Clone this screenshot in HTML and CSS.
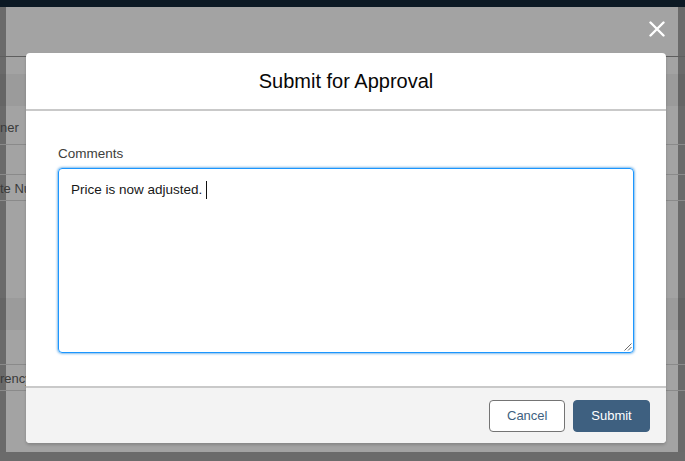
FILE: index.html
```html
<!DOCTYPE html>
<html lang="en">
<head>
<meta charset="utf-8">
<title>Submit for Approval</title>
<link rel="stylesheet" href="styles.css">
</head>
<body>
<div class="topbar"></div>
<main class="stage">
  <div class="row row-a"></div>
  <div class="row row-b"></div>
  <div class="row band"></div>
  <div class="row row-owner"><span class="bg-text">ner</span></div>
  <div class="row row-empty"></div>
  <div class="row row-quote"><span class="bg-text">te Number</span></div>
  <div class="row row-gap"></div>
  <div class="row band"></div>
  <div class="row row-c"></div>
  <div class="row row-currency"><span class="bg-text">rency</span></div>
  <div class="row row-rest"></div>
</main>
<div class="bottom-edge"></div>

<button class="close" aria-label="Close">
  <svg width="16" height="16" viewBox="0 0 16 16"><path d="M1.5 1.5 L14.5 14.5 M14.5 1.5 L1.5 14.5" stroke="#fff" stroke-width="2.4" stroke-linecap="round" fill="none"/></svg>
</button>

<section class="modal" role="dialog">
  <header class="modal-header">
    <h2 class="modal-title">Submit for Approval</h2>
  </header>
  <div class="modal-body">
    <label class="field-label">Comments</label>
    <div class="textarea">
      <span class="ta-text">Price is now adjusted.</span><span class="caret"></span>
      <svg class="grip" width="8" height="8" viewBox="0 0 8 8"><path d="M7.5 0.5 L0.5 7.5 M7.5 4 L4 7.5" stroke="#6b6b6b" stroke-width="1" fill="none"/></svg>
    </div>
  </div>
  <footer class="modal-footer">
    <button class="btn btn-neutral">Cancel</button>
    <button class="btn btn-brand">Submit</button>
  </footer>
</section>
</body>
</html>
```

FILE: styles.css
```css
* { box-sizing: border-box; }

html, body {
  margin: 0;
  padding: 0;
}

body {
  width: 685px;
  height: 461px;
  overflow: hidden;
  position: relative;
  background: #6b6b6b;
  font-family: "Liberation Sans", Arial, sans-serif;
  color: #181818;
}

.topbar {
  height: 8px;
  background: #0c1924;
  border-bottom: 1px solid #15283a;
}

.stage {
  height: 445px;
  display: flex;
  flex-direction: column;
  background: linear-gradient(to right, #6a6a6a 0, #6a6a6a 6px, #a3a3a3 6px, #a3a3a3 678px, #6a6a6a 678px);
  margin-top: -1px;
}

.row { flex: none; }

.row-a { height: 50px; border-bottom: 1px solid #5e5e5e; }
.row-b { height: 17px; }
.band { height: 32px; background: rgba(0, 0, 0, 0.045); }
.row-owner { height: 39px; padding-top: 14px; border-bottom: 1px solid #8a8a8a; }
.row-empty { height: 30px; border-bottom: 1px solid #8a8a8a; }
.row-quote { height: 26px; padding-top: 6px; border-bottom: 1px solid #8a8a8a; }
.row-gap { height: 97px; }
.row-c { height: 35px; border-bottom: 1px solid #8a8a8a; }
.row-currency { height: 26px; padding-top: 6px; border-bottom: 1px solid #8a8a8a; }
.row-rest { flex: 1; }

.bg-text {
  display: block;
  font-size: 13px;
  line-height: 15px;
  color: #3a3a3a;
  white-space: nowrap;
}

.bottom-edge {
  height: 8px;
  background: #6b6b6b;
}

.close {
  position: absolute;
  left: 649px;
  top: 21px;
  width: 16px;
  height: 16px;
  padding: 0;
  border: 0;
  background: transparent;
  display: block;
}
.close svg { display: block; }

.modal {
  position: absolute;
  left: 26px;
  top: 53px;
  width: 640px;
  height: 390px;
  background: #fff;
  border-radius: 4px;
  box-shadow: 0 2px 3px rgba(0, 0, 0, 0.18);
  display: flex;
  flex-direction: column;
  overflow: hidden;
}

.modal-header {
  height: 58px;
  border-bottom: 2px solid #c9c9c9;
  display: flex;
  align-items: center;
  justify-content: center;
  padding-top: 1px;
}

.modal-title {
  margin: 0;
  font-size: 20px;
  line-height: 25px;
  font-weight: 400;
  color: #080707;
}

.modal-body {
  flex: none;
  height: 275px;
  padding: 34px 32px 33px;
  display: flex;
  flex-direction: column;
}

.field-label {
  display: block;
  font-size: 13.5px;
  line-height: 18px;
  color: #3e3e3c;
  margin-bottom: 5px;
}

.textarea {
  position: relative;
  height: 185px;
  border: 1px solid #1b96ff;
  border-radius: 4px;
  box-shadow: 0 0 3px #0176d3;
  padding: 12px 12px;
  font-size: 13.5px;
  line-height: 18px;
  color: #181818;
}

.caret {
  display: inline-block;
  width: 1px;
  height: 18px;
  background: #111;
  vertical-align: -5px;
  margin-left: 4px;
}

.grip {
  position: absolute;
  right: 1px;
  bottom: 1px;
  display: block;
}

.modal-footer {
  flex: 1;
  background: #f3f3f3;
  border-top: 2px solid #c9c9c9;
  display: flex;
  justify-content: flex-end;
  align-items: flex-start;
  gap: 8px;
  padding: 12px 16px 11px;
}

.btn {
  height: 32px;
  border-radius: 4px;
  font-family: "Liberation Sans", Arial, sans-serif;
  font-size: 13px;
  line-height: 30px;
  padding: 0 17px;
  cursor: pointer;
}

.btn-neutral {
  width: 76px;
  background: #fff;
  border: 1px solid #747474;
  color: #3e5f80;
}

.btn-brand {
  width: 77px;
  background: #3e6080;
  border: 1px solid #3e6080;
  color: #fff;
}
```
